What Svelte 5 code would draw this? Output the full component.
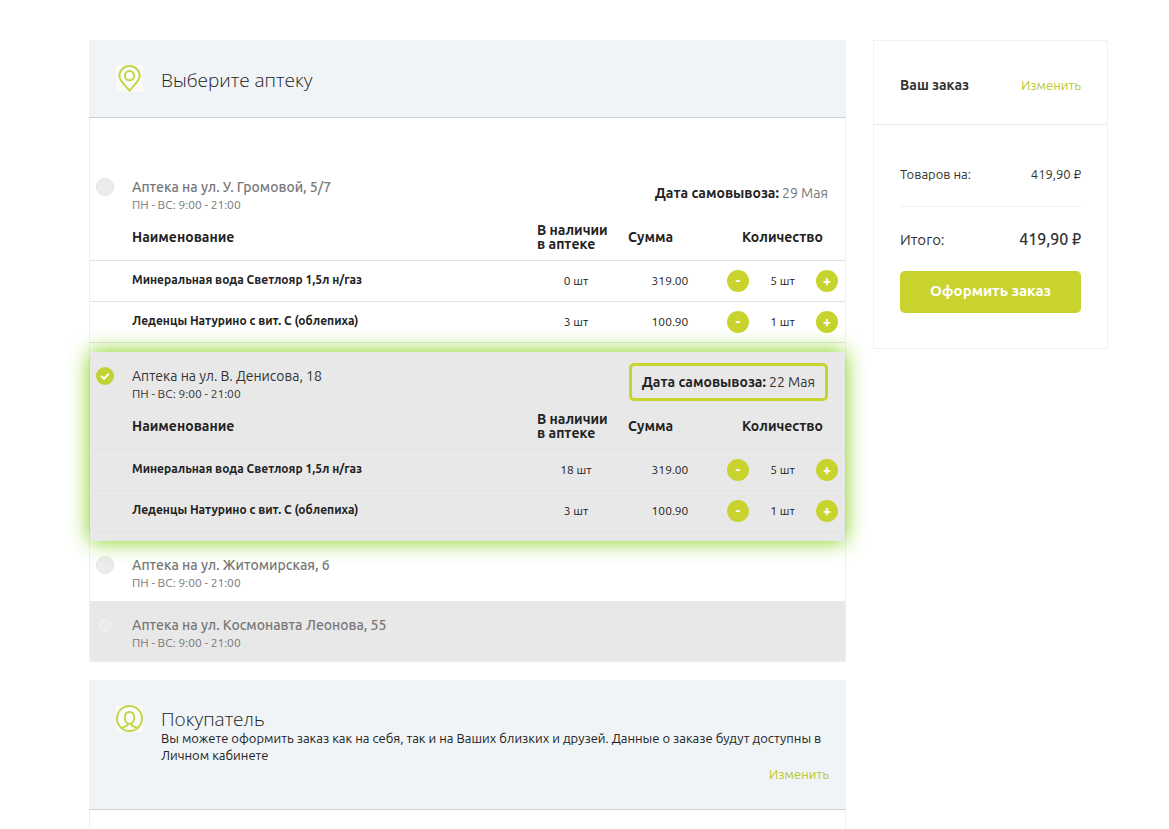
<script lang="ts">
  type Item = { name: string; stock: number; sum: string; count: number };
  type Pharmacy = { id: number; address: string; date?: string; items: Item[] };

  const hours = 'ПН - ВС: 9:00 - 21:00';

  let pharmacies: Pharmacy[] = [
    {
      id: 1,
      address: 'Аптека на ул. У. Громовой, 5/7',
      date: '29 Мая',
      items: [
        { name: 'Минеральная вода Светлояр 1,5л н/газ', stock: 0, sum: '319.00', count: 5 },
        { name: 'Леденцы Натурино с вит. С (облепиха)', stock: 3, sum: '100.90', count: 1 }
      ]
    },
    {
      id: 2,
      address: 'Аптека на ул. В. Денисова, 18',
      date: '22 Мая',
      items: [
        { name: 'Минеральная вода Светлояр 1,5л н/газ', stock: 18, sum: '319.00', count: 5 },
        { name: 'Леденцы Натурино с вит. С (облепиха)', stock: 3, sum: '100.90', count: 1 }
      ]
    },
    { id: 3, address: 'Аптека на ул. Житомирская, 6', items: [] },
    { id: 4, address: 'Аптека на ул. Космонавта Леонова, 55', items: [] }
  ];

  let selected = 2;

  function change(item: Item, step: number) {
    item.count = Math.max(1, item.count + step);
    pharmacies = pharmacies;
  }
</script>

<div class="page">
  <main>
    <section class="panel">
      <header class="panel-head">
        <svg class="icon" viewBox="0 0 27 27" aria-hidden="true">
          <path d="M13.500 25.500C10.500 21.800 3.300 16 3.300 11a10.200 10 0 0 1 20.400 0c0 5-7.200 10.800-10.200 14.500z" />
          <circle cx="13.500" cy="10.700" r="4.600" />
        </svg>
        <h2>Выберите аптеку</h2>
      </header>

      <div class="pharmacies">
        {#each pharmacies as pharmacy (pharmacy.id)}
          <article class="pharmacy" class:active={selected === pharmacy.id}>
            <div class="pharmacy-head">
              <label>
                <input type="radio" name="pharmacy" value={pharmacy.id} bind:group={selected} />
                <span class="address">{pharmacy.address}</span>
                <span class="hours">{hours}</span>
              </label>
              {#if pharmacy.date}
                <p class="pickup"><b>Дата самовывоза:</b> {pharmacy.date}</p>
              {/if}
            </div>

            {#if pharmacy.items.length}
              <div class="items">
                <table>
                  <thead>
                    <tr>
                      <th class="name">Наименование</th>
                      <th class="stock">В наличии<br />в аптеке</th>
                      <th class="sum">Сумма</th>
                      <th class="count">Количество</th>
                    </tr>
                  </thead>
                  <tbody>
                    {#each pharmacy.items as item}
                      <tr>
                        <td class="name">{item.name}</td>
                        <td>{item.stock} шт</td>
                        <td>{item.sum}</td>
                        <td>
                          <div class="counter">
                            <button type="button" aria-label="Уменьшить" on:click={() => change(item, -1)}>-</button>
                            <span>{item.count} шт</span>
                            <button type="button" aria-label="Увеличить" on:click={() => change(item, 1)}>+</button>
                          </div>
                        </td>
                      </tr>
                    {/each}
                  </tbody>
                </table>
              </div>
            {/if}
          </article>
        {/each}
      </div>
    </section>

    <section class="panel">
      <header class="panel-head">
        <svg class="icon" viewBox="0 0 27 27" aria-hidden="true">
          <circle cx="13.500" cy="13.500" r="12.500" />
          <path d="M13.500 7c-3 0-4.700 2-4.700 5.200 0 3.800 2 6.600 4.700 6.600s4.700-2.800 4.700-6.600C18.200 9 16.500 7 13.500 7z" />
          <path d="M11.500 18.500v1.800c0 1.200-4.500 1.200-6 3M15.500 18.500v1.800c0 1.200 4.500 1.200 6 3" />
        </svg>
        <div class="customer">
          <h2>Покупатель</h2>
          <p>
            Вы можете оформить заказ как на себя, так и на Ваших близких и друзей. Данные о заказе будут
            доступны в Личном кабинете
          </p>
          <a href="#customer">Изменить</a>
        </div>
      </header>
      <div class="customer-body"></div>
    </section>
  </main>

  <aside class="order">
    <header>
      <h3>Ваш заказ</h3>
      <a href="#cart">Изменить</a>
    </header>
    <div class="order-body">
      <div class="line">
        <span>Товаров на:</span>
        <span>419,90 ₽</span>
      </div>
      <div class="line total">
        <span>Итого:</span>
        <strong>419,90 ₽</strong>
      </div>
      <button type="button" class="submit">Оформить заказ</button>
    </div>
  </aside>
</div>

<style>
  :global(body) {
    background: #fff;
    color: #222;
    font-family: Ubuntu, 'Noto Sans', sans-serif;
    font-size: 13px;
  }

  h2,
  h3,
  p {
    margin: 0;
  }

  a {
    color: #b8c832;
    text-decoration: none;
  }

  button {
    border: 0;
    padding: 0;
    background: #c8d32d;
    color: #fff;
    font-family: inherit;
    font-weight: 700;
    cursor: pointer;
  }

  .page {
    display: grid;
    grid-template-columns: minmax(0, 1fr) 235px;
    align-items: start;
    gap: 27px;
    padding: 40px 61px 0 89px;
  }

  .panel + .panel {
    margin-top: 18px;
  }

  .panel-head {
    display: flex;
    gap: 18px;
    padding: 25px 17px 22px 27px;
    border-bottom: 1px solid #ccd1d4;
    background: #f0f4f7;
  }

  .icon {
    flex: none;
    width: 27px;
    height: 27px;
    background: #fafbf8;
    fill: none;
    stroke: #c3d64a;
    stroke-width: 2;
  }

  h2 {
    color: #222;
    font-family: 'Open Sans', sans-serif;
    font-size: 19px;
    font-weight: 300;
    line-height: 30px;
  }

  .pharmacies {
    padding-top: 45px;
    border: 1px solid #f0f0f0;
    border-top: 0;
  }

  .pharmacy {
    min-height: 60px;
  }

  .pharmacy:nth-child(even) {
    background: #e8e8e8;
  }

  .pharmacy.active {
    position: relative;
    box-shadow: 0 0 20px #7fcf0b;
  }

  .pharmacy-head {
    display: flex;
    justify-content: space-between;
    height: 52px;
    padding: 0 17px 0 6px;
  }

  label {
    display: grid;
    grid-template-columns: 18px auto;
    grid-template-rows: 18px 18px;
    align-items: center;
    align-content: start;
    column-gap: 18px;
    padding-top: 15px;
    color: #777;
    cursor: pointer;
  }

  .active label {
    color: #333;
  }

  input[type='radio'] {
    appearance: none;
    width: 18px;
    height: 18px;
    margin: 0;
    border: 1px solid #e3e3e3;
    border-radius: 50%;
    background: #ececec;
  }

  input[type='radio']:checked {
    display: grid;
    place-items: center;
    border: 0;
    background: #c1d332;
  }

  input[type='radio']:checked::after {
    content: '';
    width: 6px;
    height: 3px;
    margin-bottom: 2px;
    border: solid #fff;
    border-width: 0 0 2px 2px;
    transform: rotate(-45deg);
  }

  .address {
    font-size: 14px;
    font-weight: 500;
    line-height: 18px;
  }

  .active .address {
    font-weight: 400;
  }

  .hours {
    grid-column: 2;
    font-size: 12px;
    line-height: 18px;
  }

  .pickup {
    box-sizing: border-box;
    height: 38px;
    margin-top: 11px;
    color: #777;
    font-size: 14px;
    line-height: 38px;
  }

  .pickup b {
    color: #222;
  }

  .active .pickup {
    padding: 0 10px;
    border: 3px solid #c8d32d;
    border-radius: 5px;
    color: #333;
    line-height: 32px;
  }

  .items {
    padding-bottom: 9px;
  }

  table {
    width: 100%;
    border-collapse: separate;
    border-spacing: 0;
    table-layout: fixed;
  }

  th,
  td {
    box-sizing: border-box;
    padding: 0 0 2px;
    border-bottom: 1px solid #e2e2e2;
  }

  th {
    height: 46px;
    font-size: 14px;
    line-height: 14px;
    text-align: left;
  }

  td {
    height: 41px;
    padding-bottom: 1px;
    font-size: 12px;
    text-align: center;
  }

  .name {
    padding-left: 42px;
    text-align: left;
  }

  td.name {
    padding-bottom: 3px;
    font-weight: 700;
  }

  th.stock {
    width: 88px;
    padding-left: 5px;
  }

  th.sum {
    width: 100px;
    padding-left: 8px;
  }

  th.count {
    width: 125px;
    text-align: center;
  }

  .counter {
    display: flex;
    align-items: center;
    justify-content: space-between;
    padding: 0 7px;
  }

  .counter button {
    width: 22px;
    height: 22px;
    border-radius: 50%;
    font-size: 14px;
    line-height: 20px;
  }

  .customer {
    display: flex;
    flex: 1;
    flex-direction: column;
    padding-bottom: 4px;
  }

  .customer h2 {
    padding-top: 3px;
    line-height: 22px;
  }

  .customer p {
    line-height: 17px;
  }

  .customer a {
    align-self: flex-end;
    margin-top: 1px;
    line-height: 18px;
  }

  .customer-body {
    height: 18px;
    border: 1px solid #f0f0f0;
    border-width: 0 1px;
  }

  .order {
    border: 1px solid #f2f2f2;
  }

  .order header {
    display: flex;
    align-items: center;
    justify-content: space-between;
    height: 79px;
    padding: 4px 26px 0;
    border-bottom: 1px solid #e8e8e8;
  }

  h3 {
    color: #333;
    font-size: 14px;
  }

  .order-body {
    padding: 16px 26px 35px;
  }

  .line {
    display: flex;
    align-items: center;
    justify-content: space-between;
    height: 65px;
    border-bottom: 1px solid #f2f2f2;
    color: #333;
  }

  .line.total {
    height: 64px;
    border-bottom: 0;
    font-size: 15px;
  }

  .total strong {
    font-size: 16px;
    font-weight: 500;
  }

  .submit {
    width: 100%;
    height: 42px;
    padding-bottom: 3px;
    border-radius: 5px;
    font-size: 15px;
  }
</style>
